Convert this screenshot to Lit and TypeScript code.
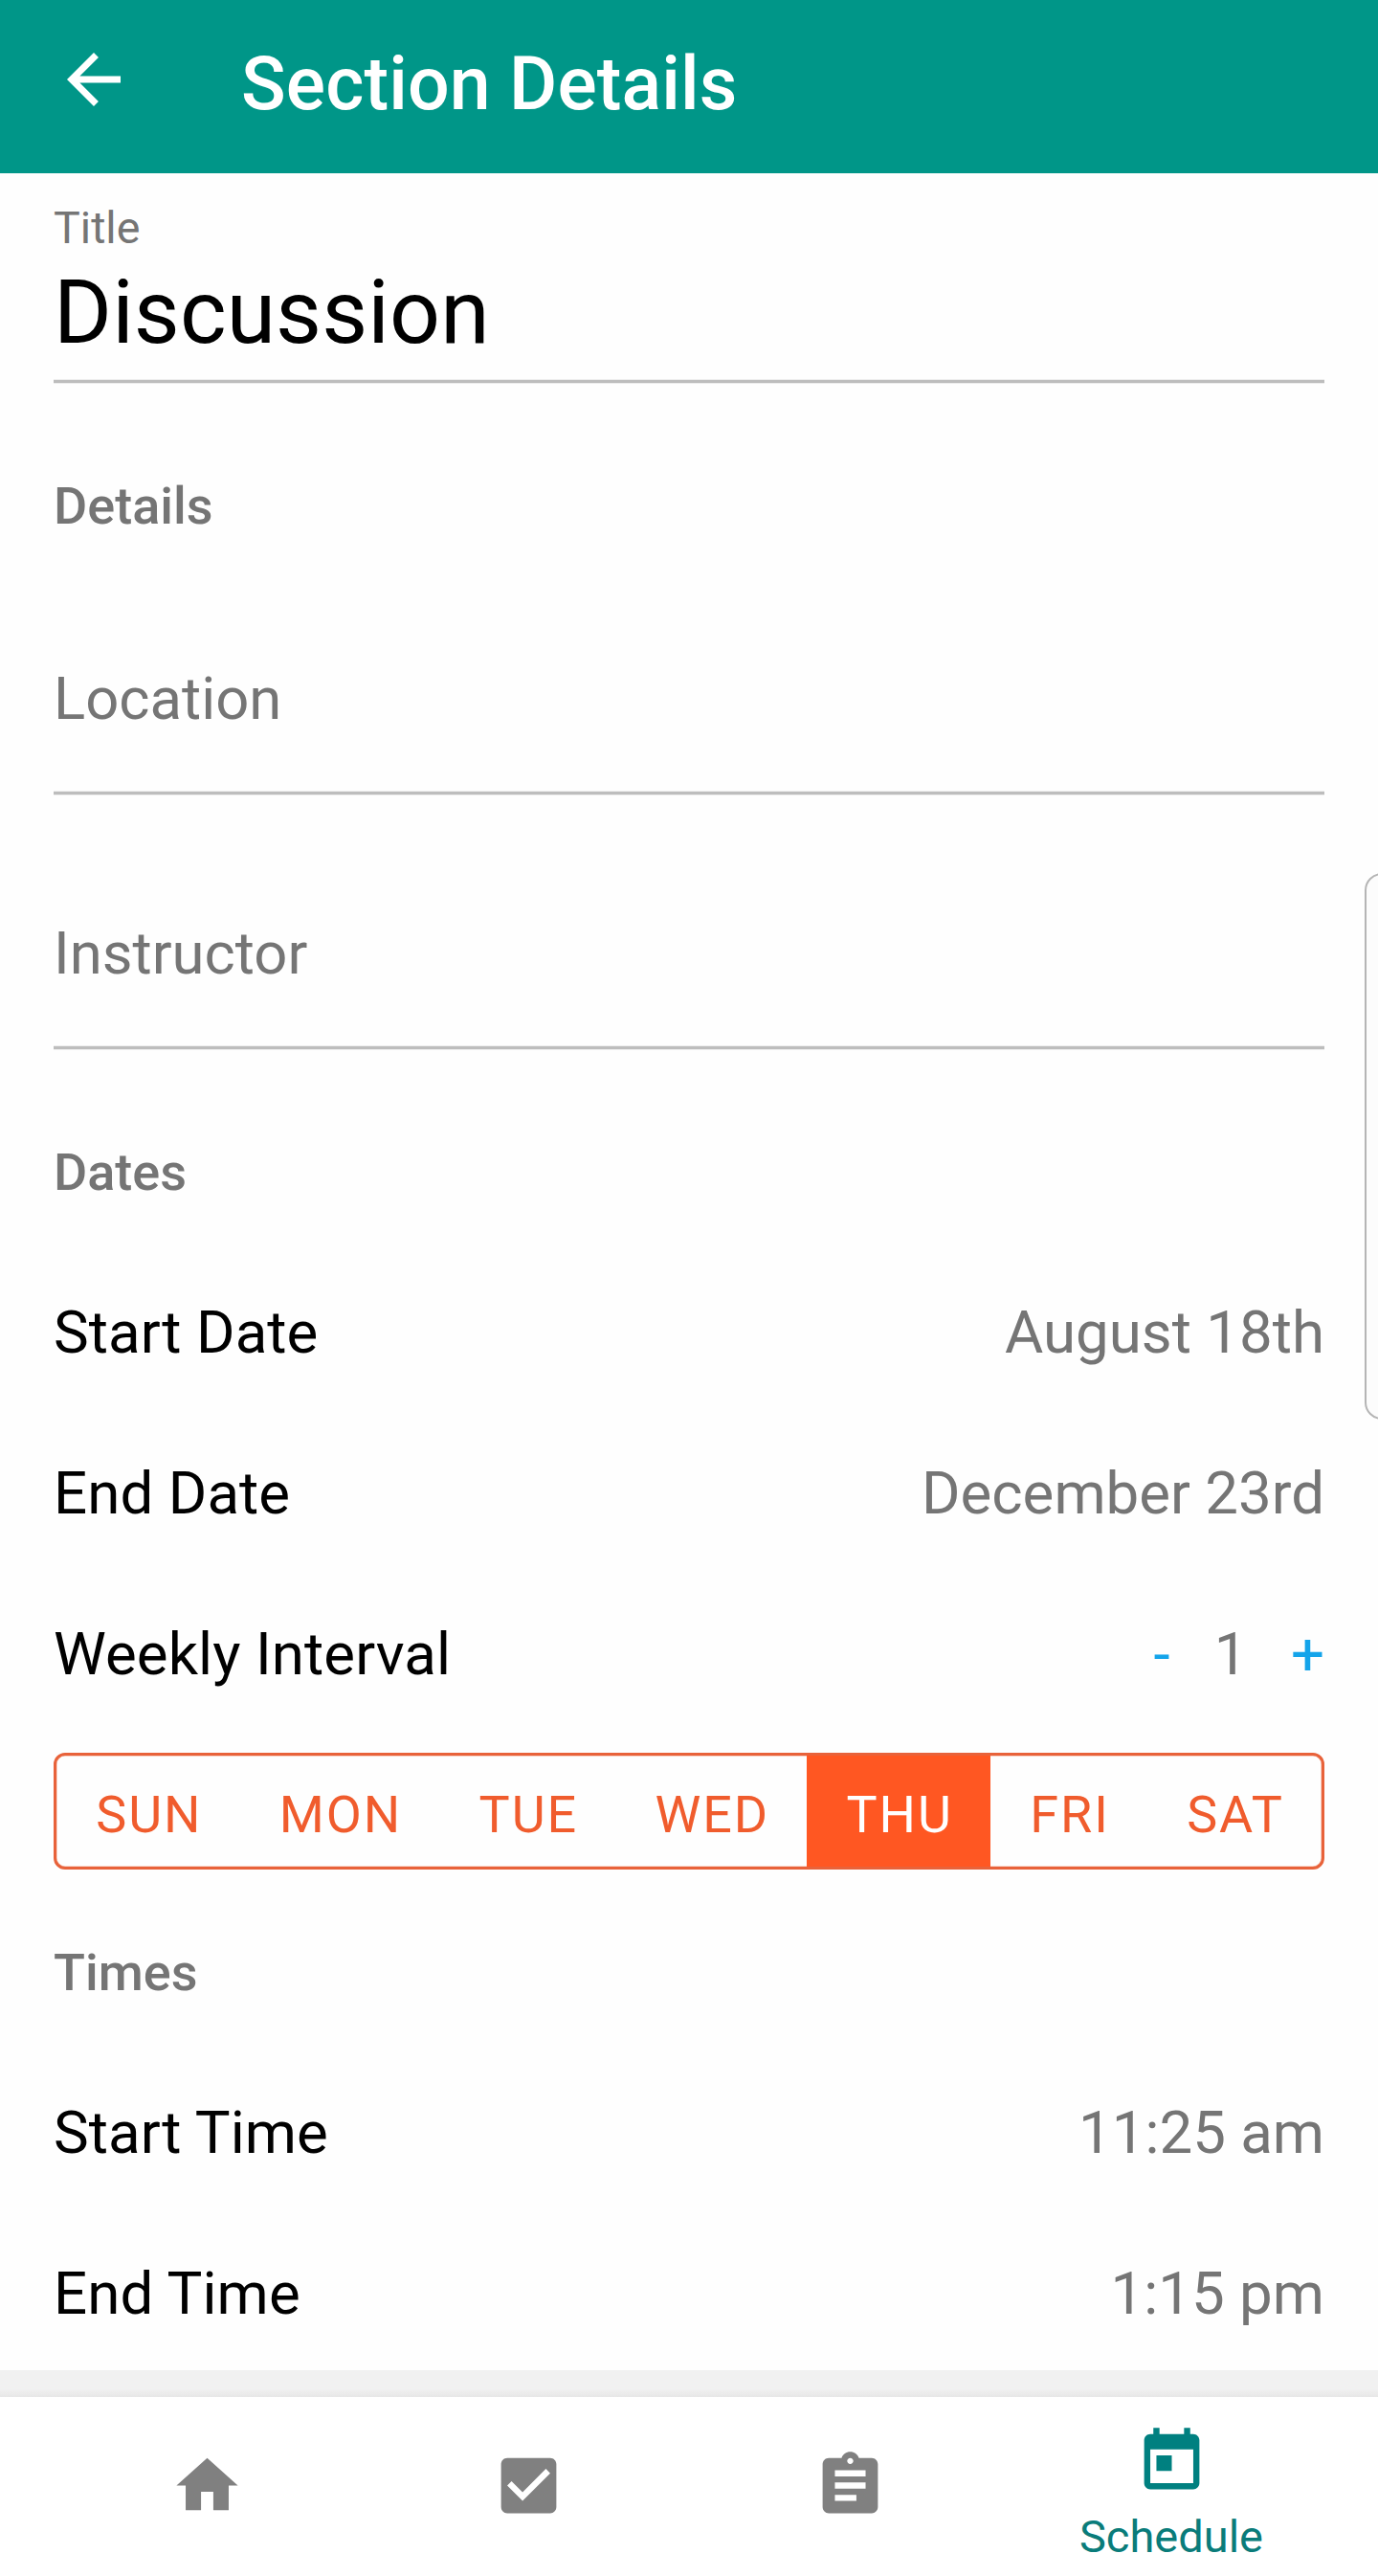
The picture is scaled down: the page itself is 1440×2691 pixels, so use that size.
import { LitElement, html, css, svg } from "lit";
import { customElement, property, state } from "lit/decorators.js";
import { classMap } from "lit/directives/class-map.js";

const ICONS: Record<string, string> = {
  back: "M20 11H7.83l5.59-5.59L12 4l-8 8 8 8 1.41-1.41L7.83 13H20v-2z",
  home: "M10 20v-6h4v6h5v-8h3L12 3 2 12h3v8z",
  check:
    "M19 3H5c-1.11 0-2 .9-2 2v14c0 1.1.89 2 2 2h14c1.11 0 2-.9 2-2V5c0-1.1-.89-2-2-2zm-9 14l-5-5 1.41-1.41L10 14.17l7.59-7.59L19 8l-9 9z",
  assignment:
    "M19 3h-4.18C14.4 1.84 13.3 1 12 1c-1.3 0-2.4.84-2.82 2H5c-1.1 0-2 .9-2 2v14c0 1.1.9 2 2 2h14c1.1 0 2-.9 2-2V5c0-1.1-.9-2-2-2zm-7 0c.55 0 1 .45 1 1s-.45 1-1 1-1-.45-1-1 .45-1 1-1zm2 14H7v-2h7v2zm3-4H7v-2h10v2zm0-4H7V7h10v2z",
  today:
    "M19 3h-1V1h-2v2H8V1H6v2H5c-1.11 0-1.99.9-1.99 2L3 19c0 1.1.89 2 2 2h14c1.1 0 2-.9 2-2V5c0-1.1-.9-2-2-2zm0 16H5V8h14v11zM7 10h5v5H7z",
};

@customElement("md-icon")
class MdIcon extends LitElement {
  @property() name = "home";

  static styles = css`
    :host {
      display: block;
      flex: none;
    }
    .glyph {
      display: block;
      width: 100%;
      height: 100%;
      fill: currentColor;
    }
  `;

  render() {
    return html`<svg class="glyph" viewBox="0 0 24 24">${svg`<path d=${ICONS[this.name]} />`}</svg>`;
  }
}

@customElement("app-root")
class AppRoot extends LitElement {
  @state() private interval = 1;
  @state() private day = "THU";

  private days = ["SUN", "MON", "TUE", "WED", "THU", "FRI", "SAT"];

  private tabs = [
    { icon: "home", label: "" },
    { icon: "check", label: "" },
    { icon: "assignment", label: "" },
    { icon: "today", label: "Schedule" },
  ];

  static styles = css`
    :host {
      display: flex;
      flex-direction: column;
      position: relative;
      width: 1440px;
      height: 2691px;
      overflow: hidden;
      background: #fefefe;
      color: #000;
      font-family: Roboto, "Liberation Sans", sans-serif;
    }
    .bar {
      display: flex;
      align-items: center;
      flex: none;
      height: 181px;
      padding-left: 56px;
      background: #009688;
      color: #fff;
    }
    .back {
      width: 84px;
      height: 84px;
      margin-bottom: 15px;
    }
    .heading {
      margin: 0 0 5px 112px;
      font-size: 77px;
      line-height: 90px;
      font-weight: 500;
      letter-spacing: 0.13px;
    }
    .form {
      flex: none;
      box-sizing: border-box;
      height: 2295px;
      padding: 30px 56px 0;
      overflow: hidden;
    }
    .label {
      color: #757575;
      font-size: 46.6px;
      line-height: 54px;
    }
    .value {
      margin-top: 8px;
      font-size: 93px;
      line-height: 108px;
      letter-spacing: 0.1px;
    }
    .rule {
      height: 3px;
      background: #bdbdbd;
      border: solid #ededed;
      border-width: 1px 0;
      margin-top: 60px;
    }
    .rule.near {
      margin-top: 15px;
    }
    .sub {
      margin-top: 96px;
      color: #757575;
      font-size: 54px;
      line-height: 64px;
      font-weight: 500;
    }
    .sub.times {
      margin-top: 76px;
    }
    .blank {
      margin-top: 129px;
      color: #757575;
      font-size: 61.6px;
      line-height: 72px;
    }
    .blank.first {
      margin-top: 133px;
    }
    .rows {
      margin-top: 51px;
    }
    .row {
      display: flex;
      justify-content: space-between;
      align-items: center;
      height: 168px;
      font-size: 61.8px;
      line-height: 72px;
    }
    .name {
      letter-spacing: 0.08px;
    }
    .data {
      color: #757575;
    }
    .stepper {
      display: flex;
      align-items: center;
      color: #757575;
    }
    .step {
      color: #14a4ea;
      cursor: pointer;
    }
    .count {
      margin: 0 45.5px 0 46px;
    }
    .days {
      display: flex;
      box-sizing: border-box;
      height: 122px;
      margin-top: 19px;
      border: 3.5px solid #e8623a;
      border-radius: 12px;
      box-shadow: inset 0 0 0 0.5px #f3a98f;
    }
    .day {
      display: flex;
      flex: 1 1 auto;
      align-items: center;
      justify-content: center;
      padding: 7px 0 0 2px;
      color: #f05c2d;
      font-size: 53.9px;
      line-height: 64px;
      letter-spacing: 1.93px;
      cursor: pointer;
    }
    .day.on {
      background: #ff5722;
      color: #fff;
    }
    .band {
      flex: none;
      height: 28px;
      background: linear-gradient(#f1f1f1 70%, #e7e7e7);
    }
    .tabs {
      display: flex;
      flex: 1;
      padding: 0 48px;
      background: #fff;
    }
    .tab {
      display: flex;
      flex: 1;
      flex-direction: column;
      align-items: center;
      padding-top: 54px;
      color: #808080;
    }
    .tab.active {
      padding-top: 29px;
      color: #008080;
    }
    .tab-icon {
      width: 77px;
      height: 77px;
    }
    .tab-label {
      margin-top: 13px;
      color: #0a7c7a;
      font-size: 47px;
      line-height: 54px;
    }
    .edge {
      position: absolute;
      top: 912px;
      left: 1426px;
      box-sizing: border-box;
      width: 40px;
      height: 571px;
      border: 2px solid #b5b5b5;
      border-radius: 18px;
      background: #fcfcfc;
    }
  `;

  private row(name: string, value: string) {
    return html`<div class="row"><span class="name">${name}</span><span class="data">${value}</span></div>`;
  }

  private step(by: number) {
    this.interval = Math.max(1, this.interval + by);
  }

  render() {
    return html`
      <header class="bar">
        <md-icon class="back" name="back"></md-icon>
        <div class="heading">Section Details</div>
      </header>
      <main class="form">
        <div class="label">Title</div>
        <div class="value">Discussion</div>
        <div class="rule near"></div>
        <div class="sub">Details</div>
        <div class="blank first">Location</div>
        <div class="rule"></div>
        <div class="blank">Instructor</div>
        <div class="rule"></div>
        <div class="sub">Dates</div>
        <div class="rows">
          ${this.row("Start Date", "August 18th")} ${this.row("End Date", "December 23rd")}
          <div class="row">
            <span class="name">Weekly Interval</span>
            <div class="stepper">
              <span class="step" @click=${() => this.step(-1)}>-</span>
              <span class="count">${this.interval}</span>
              <span class="step" @click=${() => this.step(1)}>+</span>
            </div>
          </div>
        </div>
        <div class="days">
          ${this.days.map(
            (d) => html`<div class=${classMap({ day: true, on: d === this.day })} @click=${() => (this.day = d)}>${d}</div>`
          )}
        </div>
        <div class="sub times">Times</div>
        <div class="rows">${this.row("Start Time", "11:25 am")} ${this.row("End Time", "1:15 pm")}</div>
      </main>
      <div class="band"></div>
      <nav class="tabs">
        ${this.tabs.map(
          (t) => html`<div class=${classMap({ tab: true, active: !!t.label })}>
            <md-icon class="tab-icon" name=${t.icon}></md-icon>
            ${t.label ? html`<span class="tab-label">${t.label}</span>` : ""}
          </div>`
        )}
      </nav>
      <div class="edge"></div>
    `;
  }
}
